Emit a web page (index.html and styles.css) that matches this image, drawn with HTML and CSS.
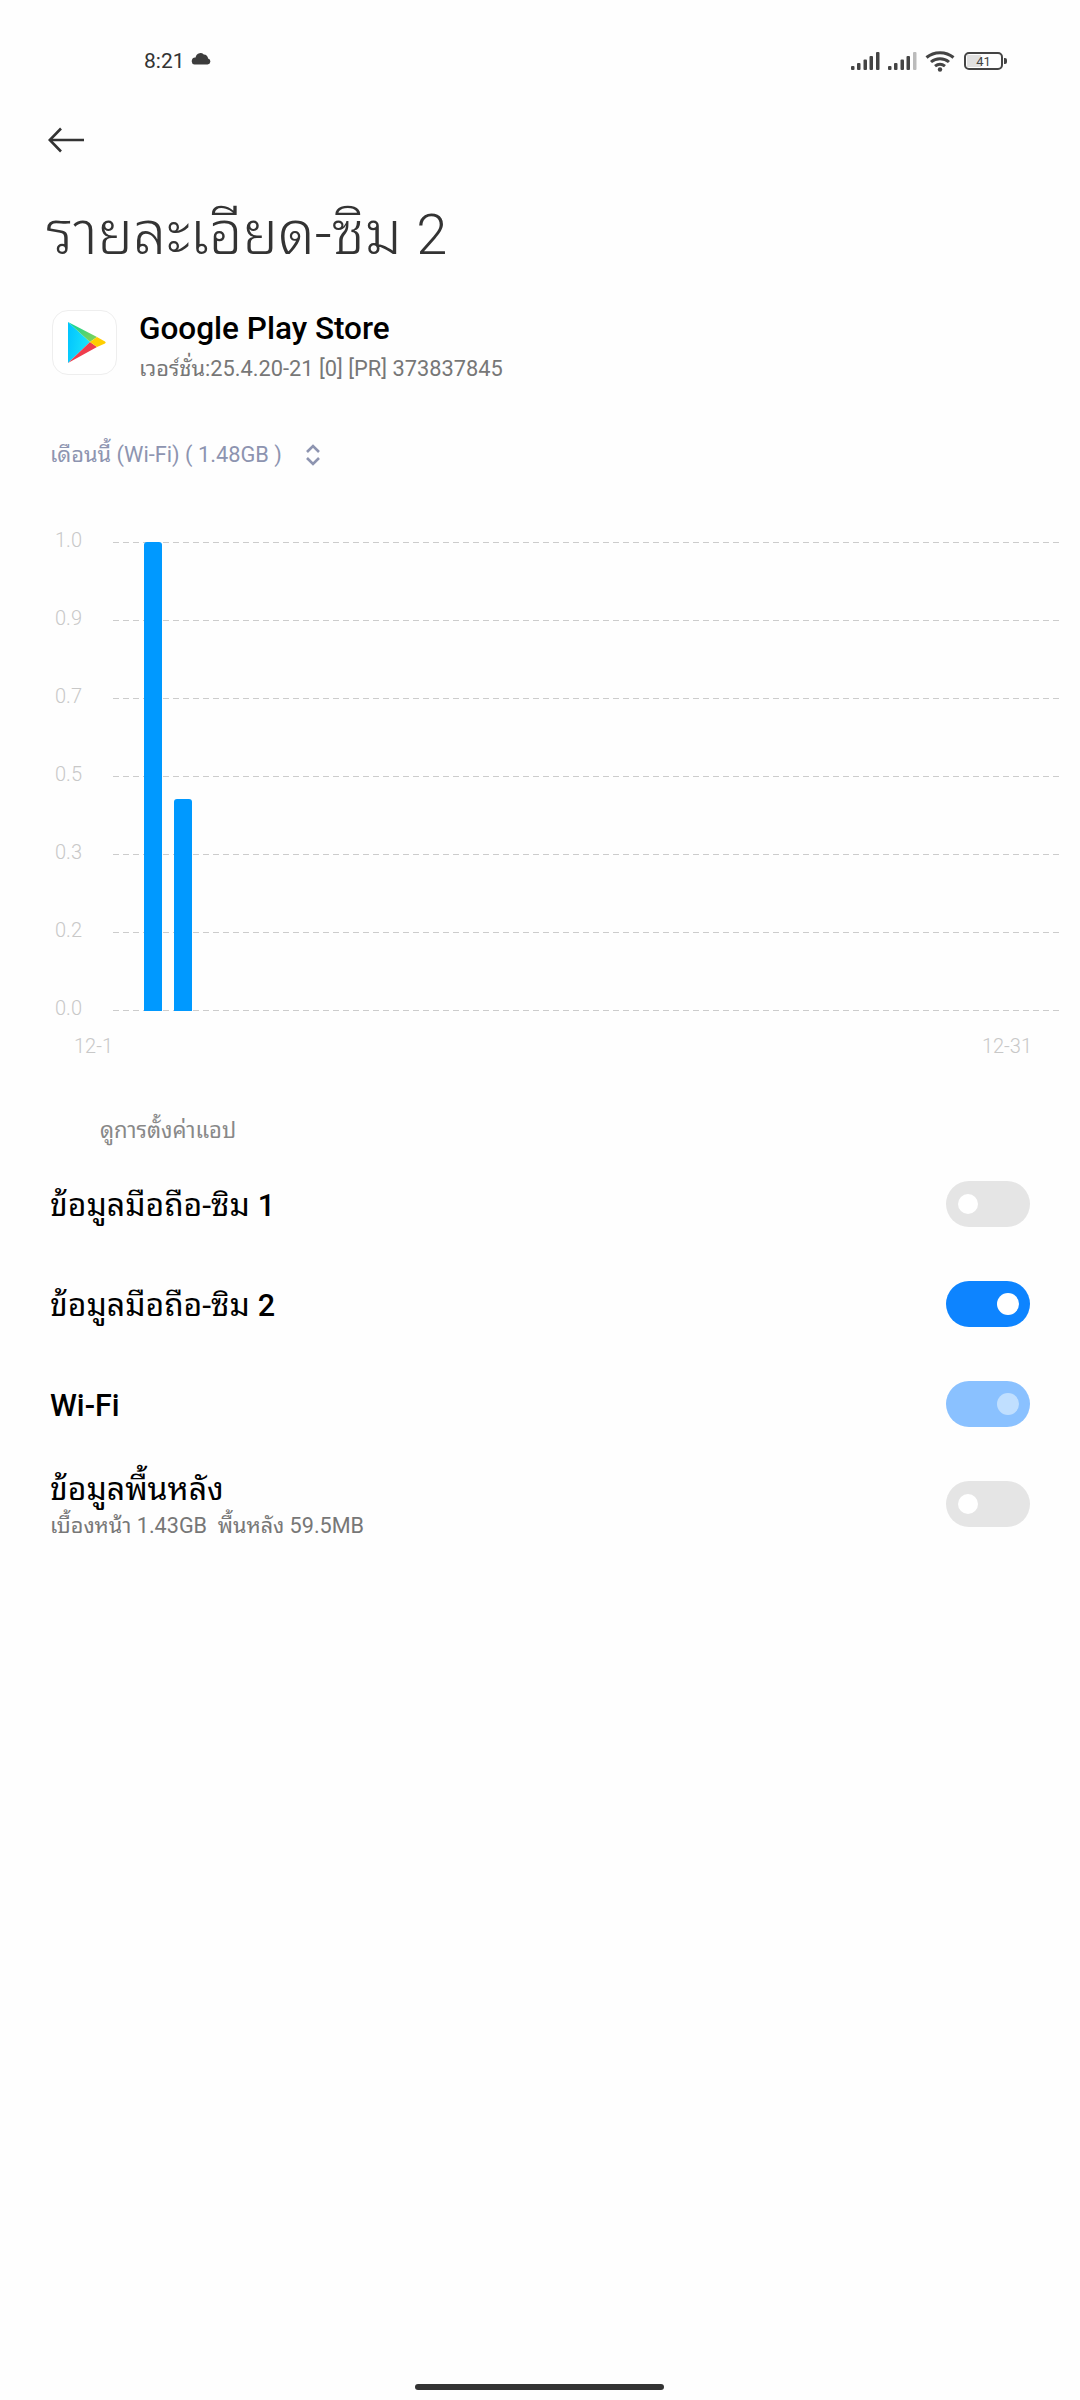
FILE: index.html
```html
<!DOCTYPE html>
<html lang="th">
<head>
<meta charset="utf-8">
<title>รายละเอียด-ซิม 2</title>
<link rel="stylesheet" href="styles.css">
</head>
<body>
<div class="screen">
  <header class="status">
    <div class="status-left">
      <span class="time">8:21</span>
      <svg class="cloud" width="20" height="12" viewBox="0 0 20 12"><path d="M3.5 11.5h13a3 3 0 0 0 .6-5.9A4.6 4.6 0 0 0 12.8 1.5 5 5 0 0 0 8.5.2 5.2 5.2 0 0 0 4.6 4.6 3.5 3.5 0 0 0 3.5 11.5z" fill="#3c3c3c"/></svg>
    </div>
    <div class="status-right">
      <svg width="30" height="20" viewBox="0 0 30 20" fill="#444"><rect x="0" y="15" width="3.5" height="4" rx="1"/><rect x="6" y="12" width="3.5" height="7" rx="1"/><rect x="12.500" y="8.500" width="3.5" height="10.500" rx="1"/><rect x="18.500" y="5" width="3.5" height="14" rx="1"/><rect x="25" y="1" width="3.5" height="18" rx="1"/></svg>
      <svg width="30" height="20" viewBox="0 0 30 20" fill="#444"><rect x="0" y="15" width="3.5" height="4" rx="1"/><rect x="6" y="12" width="3.5" height="7" rx="1"/><rect x="12.500" y="8.500" width="3.500" height="10.500" rx="1"/><rect x="18.500" y="5" width="3.500" height="14" rx="1"/><rect x="25" y="1" width="3.500" height="18" rx="1" fill="#bbb"/></svg>
      <svg class="wifi" width="30" height="22" viewBox="0 0 30 22" fill="none" stroke="#444" stroke-width="3"><path d="M1.500 7.500C9 1 21 1 28.500 7.500"/><path d="M6 12C11 7.500 19 7.500 24 12"/><path d="M10 16.200C13 13.800 17 13.800 20 16.200"/><circle cx="15" cy="19.500" r="2.200" fill="#444" stroke="none"/></svg>
      <div class="battery">
        <div class="battery-body"><span class="battery-fill"></span><span class="battery-text">41</span></div>
        <span class="battery-cap"></span>
      </div>
    </div>
  </header>

  <svg class="back" width="38" height="26" viewBox="0 0 38 26" fill="none" stroke="#333" stroke-width="2.600"><path d="M36 13H2"/><path d="M13 1.500 1.800 13 13 24.500"/></svg>

  <h1 class="title">รายละเอียด-ซิม <span class="title-num">2</span></h1>

  <section class="app">
    <div class="app-icon">
      <svg width="65" height="65" viewBox="0 0 65 65">
        <defs>
          <linearGradient id="pb" x1="0" y1="0" x2="1" y2="0.300"><stop offset="0" stop-color="#00c3ff"/><stop offset="1" stop-color="#1be2fa"/></linearGradient>
          <linearGradient id="pg" x1="0" y1="0" x2="1" y2="1"><stop offset="0" stop-color="#00d6a0"/><stop offset="1" stop-color="#8fd14f"/></linearGradient>
        </defs>
        <path d="M16 12 38 32 16 53z" fill="url(#pb)"/>
        <path d="M16 12 45 27 38 32z" fill="url(#pg)"/>
        <path d="M16 53 38 32 45 37z" fill="#ef3d4d"/>
        <path d="M45 27 53 31.500Q54.500 32.500 53 33.500L45 37 38 32z" fill="#ffce00"/>
      </svg>
    </div>
    <div class="app-info">
      <div class="app-name">Google Play Store</div>
      <div class="app-version">เวอร์ชั่น:25.4.20-21 [0] [PR] 373837845</div>
    </div>
  </section>

  <div class="period">
    <span>เดือนนี้ (Wi-Fi) ( 1.48GB )</span>
    <svg width="16" height="22" viewBox="0 0 16 22" fill="none" stroke="#8d94b0" stroke-width="2.600"><path d="M2 8 8 2l6 6"/><path d="M2 14l6 6 6-6"/></svg>
  </div>

  <section class="chart">
    <div class="tick"><span class="tick-label">1.0</span><span class="tick-line"></span></div>
    <div class="tick"><span class="tick-label">0.9</span><span class="tick-line"></span></div>
    <div class="tick"><span class="tick-label">0.7</span><span class="tick-line"></span></div>
    <div class="tick"><span class="tick-label">0.5</span><span class="tick-line"></span></div>
    <div class="tick"><span class="tick-label">0.3</span><span class="tick-line"></span></div>
    <div class="tick"><span class="tick-label">0.2</span><span class="tick-line"></span></div>
    <div class="tick tick-last"><span class="tick-label">0.0</span><span class="tick-line"></span></div>
    <span class="bar bar-one"></span>
    <span class="bar bar-two"></span>
    <div class="dates"><span>12-1</span><span>12-31</span></div>
  </section>

  <div class="settings-link">ดูการตั้งค่าแอป</div>

  <section class="rows">
    <div class="row"><div class="row-text"><div class="row-label">ข้อมูลมือถือ-ซิม <span class="row-latin">1</span></div></div><span class="switch"></span></div>
    <div class="row"><div class="row-text"><div class="row-label">ข้อมูลมือถือ-ซิม <span class="row-latin">2</span></div></div><span class="switch on"></span></div>
    <div class="row"><div class="row-text"><div class="row-label"><span class="row-latin">Wi-Fi</span></div></div><span class="switch on dim"></span></div>
    <div class="row"><div class="row-text"><div class="row-label">ข้อมูลพื้นหลัง</div><div class="row-sub">เบื้องหน้า 1.43GB&nbsp; พื้นหลัง 59.5MB</div></div><span class="switch"></span></div>
  </section>

  <div class="home-bar"></div>
</div>
</body>
</html>
```
FILE: styles.css
```css
* { box-sizing: border-box; }
html, body { margin: 0; padding: 0; background: #fff; }
body { font-family: Roboto, "Noto Sans Thai Looped", serif; }
.screen { position: relative; width: 1080px; height: 2400px; overflow: hidden; background: #fefefe; }

.status { display: flex; justify-content: space-between; align-items: center; height: 28px; margin-top: 47px; padding: 0 73px 0 144px; }
.status-left { display: flex; align-items: center; gap: 6px; }
.time { font-size: 21px; color: #333; line-height: 28px; }
.cloud { margin-top: -4px; }
.status-right { display: flex; align-items: center; gap: 7px; }
.wifi { margin-right: 2px; }
.battery { display: flex; align-items: center; gap: 1px; }
.battery-body { position: relative; width: 39px; height: 18px; border: 2.5px solid #444; border-radius: 5px; display: flex; align-items: center; justify-content: center; }
.battery-fill { position: absolute; left: 1px; top: 1px; bottom: 1px; width: 40%; background: #e0e0e0; }
.battery-text { position: relative; font-size: 13px; color: #444; line-height: 13px; }
.battery-cap { width: 3px; height: 6px; background: #444; border-radius: 0 2px 2px 0; }

.back { display: block; margin: 52px 0 0 48px; }

.title { margin: 46px 0 0 46px; font-size: 59.5px; line-height: 70px; font-weight: 300; color: #333; }
.title-num { font-size: 56px; font-weight: 300; }

.app { display: flex; align-items: center; gap: 22px; margin: 28px 0 0 52px; }
.app-icon { width: 65px; height: 65px; border: 1px solid #eee; border-radius: 16px; background: #fff; overflow: hidden; flex: none; }
.app-icon svg { display: block; margin: -1px; }
.app-info { padding-top: 9px; }
.app-name { font-size: 31.5px; line-height: 44px; font-weight: 500; color: #000; }
.app-version { font-size: 21.8px; line-height: 36px; color: #777; }

.period { display: flex; align-items: center; gap: 23px; margin: 53px 0 0 50px; font-size: 21.8px; line-height: 30px; color: #8d94b0; }

.chart { position: relative; margin: 72px 0 0 55px; }
.tick { display: flex; align-items: flex-start; height: 78px; }
.tick-last { height: 1px; }
.tick-label { width: 58px; margin-top: -14px; font-size: 20px; line-height: 24px; font-weight: 300; color: #c8c8c8; flex: none; }
.tick-line { width: 950px; height: 1px; background: repeating-linear-gradient(90deg, #ccc 0 6px, transparent 6px 10px); }
.bar { position: absolute; bottom: 47px; width: 18px; background: #0099ff; border-radius: 3px 3px 0 0; }
.bar-one { left: 89px; height: 469px; }
.bar-two { left: 119px; height: 212px; }
.dates { display: flex; justify-content: space-between; margin: 23px 48px 0 19px; font-size: 20px; line-height: 24px; font-weight: 300; color: #c8c8c8; }

.settings-link { margin: 58px 0 0 100px; font-size: 22px; line-height: 30px; color: #888; }

.rows { margin-top: 8px; padding: 0 50px; }
.row { display: flex; align-items: center; justify-content: space-between; height: 100px; }
.row-text { padding-top: 2px; }
.row-label { font-size: 32px; line-height: 42px; color: #000; }
.row-latin { font-size: 30.5px; font-weight: 500; }
.row-sub { font-size: 21.6px; line-height: 32px; color: #777; }
.switch { position: relative; width: 84px; height: 46px; border-radius: 23px; background: #e5e5e5; flex: none; }
.switch::after { content: ""; position: absolute; left: 12px; top: 13px; width: 20px; height: 20px; border-radius: 50%; background: #fff; }
.switch.on { background: #0d84ff; }
.switch.on::after { left: 51px; top: 12px; width: 22px; height: 22px; }
.switch.dim { background: #8ac1ff; }
.switch.dim::after { background: #c0dfff; }

.home-bar { position: absolute; left: 415px; top: 2384px; width: 249px; height: 6px; border-radius: 3px; background: #333; }
```
